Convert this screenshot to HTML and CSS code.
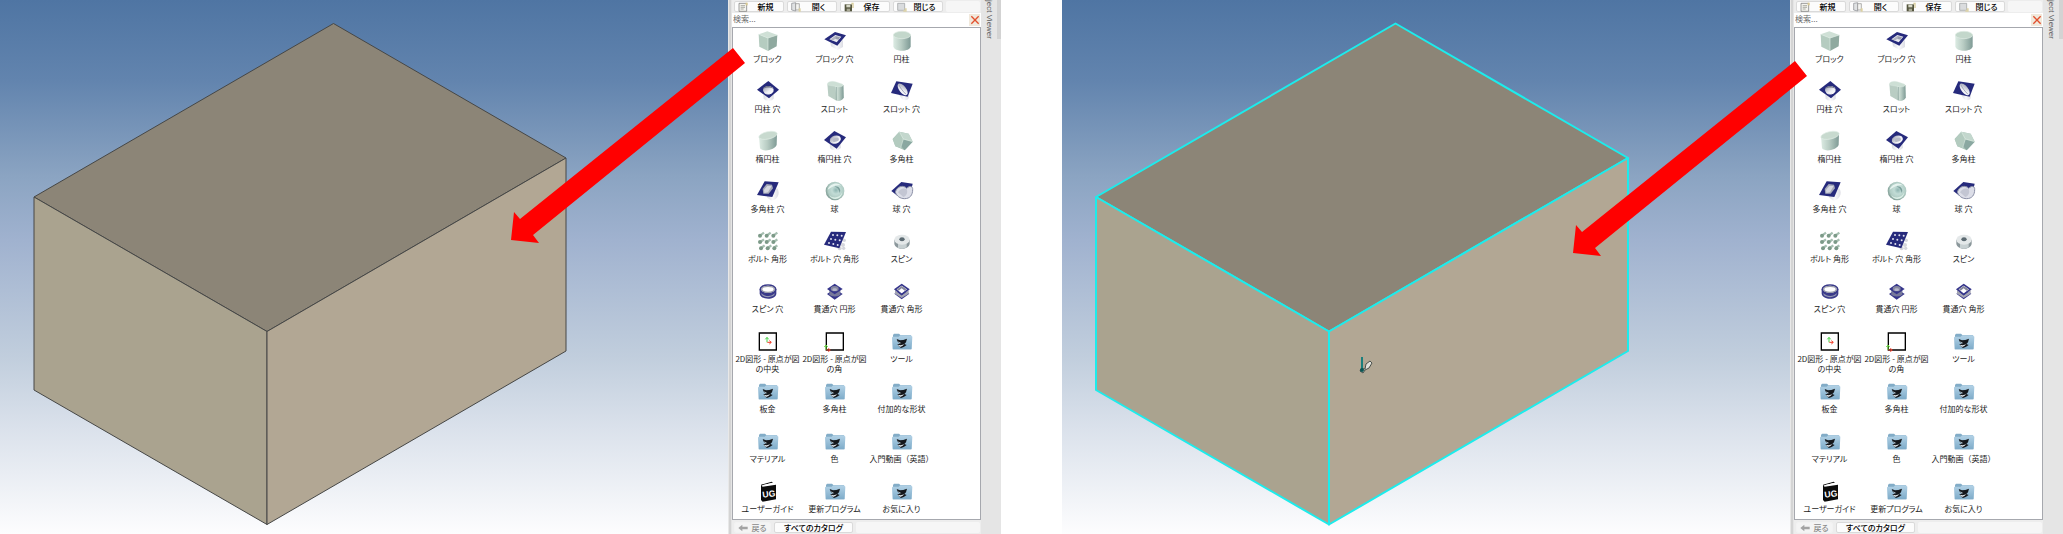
FILE: index.html
```html
<!DOCTYPE html>
<html lang="ja">
<head>
<meta charset="utf-8">
<title>カタログ</title>
<link rel="stylesheet" href="styles.css">
</head>
<body>
<svg class="defs" aria-hidden="true">
  <defs>
    <linearGradient id="gBody" x1="0" x2="1" y1="0" y2="0"><stop offset="0" stop-color="#dcebe3"/><stop offset=".45" stop-color="#b9cdc4"/><stop offset="1" stop-color="#7e9a95"/></linearGradient>
    <linearGradient id="gPale" x1="0" x2="1" y1="0" y2="0"><stop offset="0" stop-color="#d8dae2"/><stop offset=".5" stop-color="#fafafc"/><stop offset="1" stop-color="#dcdde4"/></linearGradient>
    <linearGradient id="gHole" x1="0" x2="1" y1="0" y2="1"><stop offset="0" stop-color="#9599a9"/><stop offset=".6" stop-color="#eff0f6"/><stop offset="1" stop-color="#ffffff"/></linearGradient>
    <linearGradient id="gFolder" x1="0" x2="0" y1="0" y2="1"><stop offset="0" stop-color="#b3d2e6"/><stop offset="1" stop-color="#7dabc9"/></linearGradient>
    <radialGradient id="gBall" cx=".55" cy=".45" r=".6"><stop offset="0" stop-color="#8fb5b1"/><stop offset=".35" stop-color="#c2dcd6"/><stop offset=".7" stop-color="#b0ccc4"/><stop offset="1" stop-color="#6f8c84"/></radialGradient>

    <symbol id="block" viewBox="-3 0 66 60">
      <path d="M2 10 28 1 58 12 30 21Z" fill="#cfe0d6"/><path d="M2 10 30 21V60L4 47Z" fill="#b5ccc0"/><path d="M30 21 58 12 56 46 30 60Z" fill="#8fa99f"/><path d="M2 10 30 21 58 12M30 21V60" fill="none" stroke="#dcebe2" stroke-width="2"/>
    </symbol>
    <symbol id="block-hole" viewBox="-3 0 66 60">
      <path d="M16 34 36 44 54 26V48L38 57 18 46Z" fill="url(#gPale)"/><path d="M-2 25 30 3 63 13 37 44Z" fill="#262a7c"/><path d="M13 25 31 12 49 17 35 34Z" fill="#e9eaf1"/><path d="M17 25 31 15V24L22 29Z" fill="#b2b5c2"/><path d="M31 15 45 18 41 26 31 24Z" fill="#9a9eae"/>
    </symbol>
    <symbol id="cylinder" viewBox="-3 0 66 60">
      <path d="M4 11V46C6 64 54 64 56 46V11Z" fill="url(#gBody)"/><ellipse cx="30" cy="12" rx="26" ry="11" fill="#c3d7cb" stroke="#e1ede6" stroke-width="2"/>
    </symbol>
    <symbol id="cylinder-hole" viewBox="-3 0 66 60">
      <path d="M16 40H47V52C45 62 20 62 17 52Z" fill="url(#gPale)"/><path d="M-3 26 31 0 63 26 33 52Z" fill="#262a7c"/><ellipse cx="31" cy="27" rx="16" ry="12" fill="url(#gHole)"/><path d="M16 23C20 12 40 12 46 23 38 18 24 18 16 23Z" fill="#6c7187"/><path d="M19 35C26 41 38 41 45 32" fill="none" stroke="#fff" stroke-width="3"/>
    </symbol>
    <symbol id="slot" viewBox="-3 0 66 60">
      <path d="M7 8 10 45 32 58C42 61 52 57 56 50L55 12Z" fill="#b9cdc3"/><path d="M31 16 35 58C44 61 52 57 56 50L55 12Z" fill="url(#gBody)"/><path d="M7 9C8 0 24-1 34 3L52 9C60 14 48 20 36 17L12 13C8 12 7 11 7 9Z" fill="#cddfd5" stroke="#e1ede6" stroke-width="1"/><path d="M34 18V58" stroke="#829d96" stroke-width="2"/>
    </symbol>
    <symbol id="slot-hole" viewBox="-3 0 66 60">
      <path d="M20 40 52 28 50 52C46 60 36 58 30 54Z" fill="url(#gPale)"/><path d="M13 1 62 8 47 47-3 36Z" fill="#262a7c"/><ellipse cx="32" cy="25" rx="21" ry="10" transform="rotate(52 32 25)" fill="url(#gHole)"/><path d="M20 10C24 20 32 30 42 40" stroke="#a2a6b8" stroke-width="3" fill="none"/>
    </symbol>
    <symbol id="oval" viewBox="-3 0 66 60">
      <path d="M3 17 6 52C16 64 48 58 56 42L57 7Z" fill="url(#gBody)"/><ellipse cx="30" cy="13" rx="28" ry="11" transform="rotate(-12 30 13)" fill="#c8dacf" stroke="#e1ede6" stroke-width="2"/>
    </symbol>
    <symbol id="oval-hole" viewBox="-3 0 66 60">
      <path d="M14 38 46 34 48 50C42 60 18 60 15 50Z" fill="url(#gPale)"/><path d="M-3 27 28 0 63 19 35 53Z" fill="#262a7c"/><ellipse cx="31" cy="26" rx="17" ry="12" transform="rotate(-18 31 26)" fill="url(#gHole)"/><ellipse cx="32" cy="26" rx="10" ry="6" transform="rotate(-18 32 26)" fill="#b7bac8"/>
    </symbol>
    <symbol id="prism" viewBox="-3 0 66 60">
      <path d="M2 24 22 2 50 8 62 32 38 58 10 46Z" fill="#a9c4b8"/><path d="M22 2 50 8 62 32 32 25Z" fill="#c3d7cd"/><path d="M32 25 62 32 38 58 26 44Z" fill="#8aa8a1"/><path d="M2 24 22 2 34 24 24 50 10 46Z" fill="#b3cbbf"/><path d="M22 2 34 24 62 32M34 24 26 50" fill="none" stroke="#dcebe2" stroke-width="2"/>
    </symbol>
    <symbol id="prism-hole" viewBox="-3 0 66 60">
      <path d="M36 26 58 22C68 38 58 60 38 58L26 48Z" fill="url(#gPale)"/><path d="M20 1 62 4 43 48-3 42Z" fill="#262a7c"/><path d="M14 24 26 9 42 11 45 22 32 38 16 38Z" fill="#a5a9b8"/><path d="M18 26 28 15 41 15 30 34 19 36Z" fill="#d5d7e0"/>
    </symbol>
    <symbol id="ball" viewBox="-3 0 66 60">
      <circle cx="30" cy="30" r="28" fill="url(#gBall)"/><path d="M8 26C14 8 38 2 48 14 34 10 22 18 8 26Z" fill="#e6f3ef"/><path d="M12 42C24 54 44 52 52 34 50 56 22 62 12 42Z" fill="#dcefe7"/><path d="M28 16C42 14 50 26 44 36 42 26 38 20 28 16Z" fill="#7a9f9b"/>
    </symbol>
    <symbol id="ball-hole" viewBox="-3 0 66 60">
      <path d="M-2 30 28 3 62 8 54 42 16 44Z" fill="#262a7c"/><path d="M10 33C16 14 36 12 44 22 54 12 63 16 62 26 62 42 54 53 38 53 24 53 14 45 10 33Z" fill="#dcdee8" stroke="#8a8fa6" stroke-width="3"/><path d="M18 34C24 22 36 20 44 24 48 34 44 44 34 48Z" fill="#c3c6d3"/>
    </symbol>
    <symbol id="bolts" viewBox="-3 0 66 60">
      <path d="M7 13 18 5M27 13 38 5M47 13 58 5M7 33 18 25M27 33 38 25M47 33 58 25M9 51 20 43M29 51 40 43M47 51 58 43" stroke="#a6bfb1" stroke-width="7"/><g fill="#7c9a88"><circle cx="6" cy="14" r="6"/><circle cx="26" cy="14" r="6"/><circle cx="46" cy="14" r="6"/><circle cx="6" cy="33" r="6"/><circle cx="26" cy="33" r="6"/><circle cx="46" cy="33" r="6"/><circle cx="9" cy="52" r="6"/><circle cx="29" cy="52" r="6"/><circle cx="49" cy="52" r="6"/></g>
    </symbol>
    <symbol id="bolt-holes" viewBox="-3 0 66 60">
      <g fill="#d5d6dc"><circle cx="44" cy="52" r="6"/><circle cx="54" cy="42" r="6"/><circle cx="58" cy="28" r="5"/><circle cx="56" cy="52" r="5"/></g><path d="M18 2 63 3 43 52-3 41Z" fill="#262a7c"/><g fill="#e2e3f0"><circle cx="24" cy="12" r="3"/><circle cx="37" cy="13" r="3"/><circle cx="50" cy="14" r="3"/><circle cx="18" cy="24" r="3"/><circle cx="31" cy="26" r="3"/><circle cx="44" cy="28" r="3"/><circle cx="12" cy="36" r="3"/><circle cx="25" cy="39" r="3"/><circle cx="38" cy="42" r="3"/></g>
    </symbol>
    <symbol id="spin" viewBox="-3 0 66 60">
      <path d="M7 26V38C10 58 50 58 53 38V26Z" fill="#8b979b"/><path d="M18 30V51C30 55 38 53 44 49V30Z" fill="#c7d0d2"/><ellipse cx="30" cy="26" rx="23" ry="15" fill="#e4e8e9"/><ellipse cx="30" cy="25" rx="8" ry="6" fill="#5c6a72"/>
    </symbol>
    <symbol id="spin-hole" viewBox="-3 0 66 60">
      <path d="M5 24V38C8 58 53 58 55 38V24Z" fill="#3a3a8a"/><path d="M10 36C20 48 42 48 50 36L49 42C38 51 20 50 11 42Z" fill="#9598b2"/><ellipse cx="30" cy="25" rx="23" ry="13" fill="#fff" stroke="#3a3a8a" stroke-width="5"/><ellipse cx="30" cy="25" rx="19" ry="9" fill="none" stroke="#9a9ca9" stroke-width="4"/>
    </symbol>
    <symbol id="through-round" viewBox="-3 0 66 60">
      <path d="M6 39 29 23 53 39 29 56Z" fill="#35358b"/><path d="M13 23V40C18 49 42 49 46 40V23Z" fill="#76789a"/><path d="M6 24 29 8 53 24 29 40Z" fill="#35358b"/><ellipse cx="29" cy="23" rx="12" ry="8" fill="#8587a0"/><ellipse cx="29" cy="26" rx="7" ry="4" fill="#b6b7ca"/>
    </symbol>
    <symbol id="through-square" viewBox="-3 0 66 60">
      <path d="M7 38 29 23 52 38 29 55Z" fill="#35358b"/><path d="M9 27 29 43 50 27V38L29 51 9 38Z" fill="#a3a4b2"/><path d="M29 11 49 25 29 40 10 25Z" fill="#fff" stroke="#35358b" stroke-width="5"/><path d="M15 25 29 15 44 25 38 29 29 22 20 29Z" fill="#85879a"/>
    </symbol>
    <symbol id="origin-center" viewBox="-3 0 66 60">
      <path d="M4 6H55V57H4Z" fill="#fff" stroke="#000" stroke-width="4"/><path d="M27 34V20M22 25 27 19 32 25" fill="none" stroke="#45d045" stroke-width="3"/><path d="M28 34H39M34 29 40 34 34 39" fill="none" stroke="#f03c28" stroke-width="3"/>
    </symbol>
    <symbol id="origin-corner" viewBox="-3 0 66 60">
      <path d="M4 6H55V57H4Z" fill="#fff" stroke="#000" stroke-width="4"/><path d="M3 57V43M-2 48 3 42 8 48" fill="none" stroke="#65d83a" stroke-width="3"/><path d="M4 57H15M10 52 16 57 10 62" fill="none" stroke="#f03c28" stroke-width="3"/>
    </symbol>
    <symbol id="folder" viewBox="-3 0 66 60">
      <path d="M3 12 6 8H21L25 12H57V55H3Z" fill="#82acc7"/><path d="M0 20Q0 17 3 17L20 17 25 13H57L61 17 59 55H2Z" fill="url(#gFolder)"/><path d="M14 24 24 28 34 27 45 23 42 34 37 39 44 42 35 48 27 51 22 47 16 40 24 38 17 32Z" fill="#15181c"/><path d="M17 41 26 43 37 40 31 45 24 48Z" fill="#dfe6ea"/><path d="M16 31 23 37 28 37 22 33Z" fill="#c9d6de"/>
    </symbol>
    <symbol id="guide" viewBox="-3 0 66 60">
      <path d="M9 11 41 2 45 5 14 13 10 15Z" fill="#0b0b0b"/><path d="M12 13 43 5 46 9 15 15Z" fill="#fff"/><path d="M9 13 14 17 54 11V55L14 62 9 57Z" fill="#0b0b0b"/><text x="33" y="48" transform="rotate(-7 33 40)" class="guide-mark">UG</text>
    </symbol>
    <symbol id="t-new" viewBox="0 0 30 30"><path d="M3 4H26V28H3Z" fill="#f4f4ee" stroke="#6c6c6c" stroke-width="2"/><path d="M8 11H21M8 16H21M8 21H17" stroke="#8a8a80" stroke-width="2"/><path d="M23 2H29V10H23Z" fill="#d8c890"/></symbol>
    <symbol id="t-open" viewBox="0 0 30 30"><path d="M2 4 14 2V27L2 24Z" fill="#e0e2e4" stroke="#85888c" stroke-width="2"/><path d="M14 5H25V24H14Z" fill="#f5f5f2" stroke="#8c8c8c" stroke-width="2"/><path d="M23 19H29V29H23Z" fill="#dcd0a0"/></symbol>
    <symbol id="t-save" viewBox="0 0 30 30"><path d="M2 7H24V28H2Z" fill="#55563f"/><path d="M7 8H19V16H7Z" fill="#d8d9c8"/><path d="M8 20H18V28H8Z" fill="#a9a995"/><path d="M22 2H29V18H25V7H22Z" fill="#d9ce9e"/></symbol>
    <symbol id="t-close" viewBox="0 0 30 30"><path d="M2 4H23V25H2Z" fill="#dadcde" stroke="#96999c" stroke-width="2"/><path d="M23 19H29V29H19V25H23Z" fill="#ddd3a8"/></symbol>
    <symbol id="t-clear" viewBox="0 0 30 30"><path d="M4 4 26 26M26 4 4 26" stroke="#e2502e" stroke-width="4"/></symbol>
    <symbol id="t-back" viewBox="0 0 30 24"><path d="M1 12 13 2V8H29V16H13V22Z" fill="#a3a3a3"/></symbol>
  </defs>
</svg>

<main class="page">
  <section class="shot">
    <svg class="scene" viewBox="0 0 728 534" preserveAspectRatio="xMinYMin meet" role="img" aria-label="ブロック">
      <g class="solid">
        <path class="face-top" d="M34 197 333.5 23.5 566 158 267 331.5Z"/>
        <path class="face-left" d="M34 197 267 331.5V524.5L34 390Z"/>
        <path class="face-right" d="M267 331.5 566 158V351L267 524.5Z"/>
      </g>
    </svg>
    <aside class="panel">
      <div class="browser">
        <div class="bar">
          <button class="tool"><svg class="tool-ico"><use href="#t-new"/></svg><span>新規</span></button>
          <button class="tool"><svg class="tool-ico"><use href="#t-open"/></svg><span>開く</span></button>
          <button class="tool"><svg class="tool-ico"><use href="#t-save"/></svg><span>保存</span></button>
          <button class="tool"><svg class="tool-ico"><use href="#t-close"/></svg><span>閉じる</span></button>
          <span class="filler"></span>
        </div>
        <div class="search"><input class="search-box" type="text" placeholder="検索..." aria-label="検索"><button class="clear" aria-label="クリア"><svg class="clear-ico"><use href="#t-clear"/></svg></button></div>
        <div class="catalog">
          <button class="item"><svg class="ico"><use href="#block"/></svg><span>ブロック</span></button>
          <button class="item"><svg class="ico"><use href="#block-hole"/></svg><span>ブロック 穴</span></button>
          <button class="item"><svg class="ico"><use href="#cylinder"/></svg><span>円柱</span></button>
          <button class="item"><svg class="ico"><use href="#cylinder-hole"/></svg><span>円柱 穴</span></button>
          <button class="item"><svg class="ico"><use href="#slot"/></svg><span>スロット</span></button>
          <button class="item"><svg class="ico"><use href="#slot-hole"/></svg><span>スロット 穴</span></button>
          <button class="item"><svg class="ico"><use href="#oval"/></svg><span>楕円柱</span></button>
          <button class="item"><svg class="ico"><use href="#oval-hole"/></svg><span>楕円柱 穴</span></button>
          <button class="item"><svg class="ico"><use href="#prism"/></svg><span>多角柱</span></button>
          <button class="item"><svg class="ico"><use href="#prism-hole"/></svg><span>多角柱 穴</span></button>
          <button class="item"><svg class="ico"><use href="#ball"/></svg><span>球</span></button>
          <button class="item"><svg class="ico"><use href="#ball-hole"/></svg><span>球 穴</span></button>
          <button class="item"><svg class="ico"><use href="#bolts"/></svg><span>ボルト 角形</span></button>
          <button class="item"><svg class="ico"><use href="#bolt-holes"/></svg><span>ボルト 穴 角形</span></button>
          <button class="item"><svg class="ico"><use href="#spin"/></svg><span>スピン</span></button>
          <button class="item"><svg class="ico"><use href="#spin-hole"/></svg><span>スピン 穴</span></button>
          <button class="item"><svg class="ico"><use href="#through-round"/></svg><span>貫通穴 円形</span></button>
          <button class="item"><svg class="ico"><use href="#through-square"/></svg><span>貫通穴 角形</span></button>
          <button class="item"><svg class="ico"><use href="#origin-center"/></svg><span>2D図形 - 原点が図<br>の中央</span></button>
          <button class="item"><svg class="ico"><use href="#origin-corner"/></svg><span>2D図形 - 原点が図<br>の角</span></button>
          <button class="item"><svg class="ico"><use href="#folder"/></svg><span>ツール</span></button>
          <button class="item"><svg class="ico"><use href="#folder"/></svg><span>板金</span></button>
          <button class="item"><svg class="ico"><use href="#folder"/></svg><span>多角柱</span></button>
          <button class="item"><svg class="ico"><use href="#folder"/></svg><span>付加的な形状</span></button>
          <button class="item"><svg class="ico"><use href="#folder"/></svg><span>マテリアル</span></button>
          <button class="item"><svg class="ico"><use href="#folder"/></svg><span>色</span></button>
          <button class="item full"><svg class="ico"><use href="#folder"/></svg><span>入門動画（英語）</span></button>
          <button class="item"><svg class="ico"><use href="#guide"/></svg><span>ユーザーガイド</span></button>
          <button class="item"><svg class="ico"><use href="#folder"/></svg><span>更新プログラム</span></button>
          <button class="item"><svg class="ico"><use href="#folder"/></svg><span>お気に入り</span></button>
        </div>
        <div class="bar bar-bottom">
          <button class="tool back" disabled><svg class="back-ico"><use href="#t-back"/></svg><span>戻る</span></button>
          <button class="tool all">すべてのカタログ</button>
          <span class="filler"></span>
        </div>
      </div>
      <div class="rail"><div class="rail-tab">ject Viewer</div><div class="rail-edge"></div></div>
    </aside>
    <svg class="arrow" viewBox="0 0 1001 534" preserveAspectRatio="xMinYMin meet" aria-hidden="true"><path d="M511 240 514 212 520 219 733 48 745 63 533 235 539 243Z"/></svg>
  </section>

  <section class="shot">
    <svg class="scene" viewBox="0 0 728 534" preserveAspectRatio="xMinYMin meet" role="img" aria-label="選択されたブロック">
      <g class="solid selected">
        <path class="face-top" d="M34 197 333.5 23.5 566 158 267 331.5Z"/>
        <path class="face-left" d="M34 197 267 331.5V524.5L34 390Z"/>
        <path class="face-right" d="M267 331.5 566 158V351L267 524.5Z"/>
      </g>
      <path d="M299 369 303 369 304 364 308 361 310 363 307 368 303 370 301 373 298 371Z" fill="#e2e2dc" stroke="#4a504b"/>
      <path d="M300 357V370" stroke="#1b7f7c" stroke-width="2"/>
      <circle cx="300" cy="370" r="2" fill="#0b5553"/>
    </svg>
    <aside class="panel">
      <div class="browser">
        <div class="bar">
          <button class="tool"><svg class="tool-ico"><use href="#t-new"/></svg><span>新規</span></button>
          <button class="tool"><svg class="tool-ico"><use href="#t-open"/></svg><span>開く</span></button>
          <button class="tool"><svg class="tool-ico"><use href="#t-save"/></svg><span>保存</span></button>
          <button class="tool"><svg class="tool-ico"><use href="#t-close"/></svg><span>閉じる</span></button>
          <span class="filler"></span>
        </div>
        <div class="search"><input class="search-box" type="text" placeholder="検索..." aria-label="検索"><button class="clear" aria-label="クリア"><svg class="clear-ico"><use href="#t-clear"/></svg></button></div>
        <div class="catalog">
          <button class="item"><svg class="ico"><use href="#block"/></svg><span>ブロック</span></button>
          <button class="item"><svg class="ico"><use href="#block-hole"/></svg><span>ブロック 穴</span></button>
          <button class="item"><svg class="ico"><use href="#cylinder"/></svg><span>円柱</span></button>
          <button class="item"><svg class="ico"><use href="#cylinder-hole"/></svg><span>円柱 穴</span></button>
          <button class="item"><svg class="ico"><use href="#slot"/></svg><span>スロット</span></button>
          <button class="item"><svg class="ico"><use href="#slot-hole"/></svg><span>スロット 穴</span></button>
          <button class="item"><svg class="ico"><use href="#oval"/></svg><span>楕円柱</span></button>
          <button class="item"><svg class="ico"><use href="#oval-hole"/></svg><span>楕円柱 穴</span></button>
          <button class="item"><svg class="ico"><use href="#prism"/></svg><span>多角柱</span></button>
          <button class="item"><svg class="ico"><use href="#prism-hole"/></svg><span>多角柱 穴</span></button>
          <button class="item"><svg class="ico"><use href="#ball"/></svg><span>球</span></button>
          <button class="item"><svg class="ico"><use href="#ball-hole"/></svg><span>球 穴</span></button>
          <button class="item"><svg class="ico"><use href="#bolts"/></svg><span>ボルト 角形</span></button>
          <button class="item"><svg class="ico"><use href="#bolt-holes"/></svg><span>ボルト 穴 角形</span></button>
          <button class="item"><svg class="ico"><use href="#spin"/></svg><span>スピン</span></button>
          <button class="item"><svg class="ico"><use href="#spin-hole"/></svg><span>スピン 穴</span></button>
          <button class="item"><svg class="ico"><use href="#through-round"/></svg><span>貫通穴 円形</span></button>
          <button class="item"><svg class="ico"><use href="#through-square"/></svg><span>貫通穴 角形</span></button>
          <button class="item"><svg class="ico"><use href="#origin-center"/></svg><span>2D図形 - 原点が図<br>の中央</span></button>
          <button class="item"><svg class="ico"><use href="#origin-corner"/></svg><span>2D図形 - 原点が図<br>の角</span></button>
          <button class="item"><svg class="ico"><use href="#folder"/></svg><span>ツール</span></button>
          <button class="item"><svg class="ico"><use href="#folder"/></svg><span>板金</span></button>
          <button class="item"><svg class="ico"><use href="#folder"/></svg><span>多角柱</span></button>
          <button class="item"><svg class="ico"><use href="#folder"/></svg><span>付加的な形状</span></button>
          <button class="item"><svg class="ico"><use href="#folder"/></svg><span>マテリアル</span></button>
          <button class="item"><svg class="ico"><use href="#folder"/></svg><span>色</span></button>
          <button class="item full"><svg class="ico"><use href="#folder"/></svg><span>入門動画（英語）</span></button>
          <button class="item"><svg class="ico"><use href="#guide"/></svg><span>ユーザーガイド</span></button>
          <button class="item"><svg class="ico"><use href="#folder"/></svg><span>更新プログラム</span></button>
          <button class="item"><svg class="ico"><use href="#folder"/></svg><span>お気に入り</span></button>
        </div>
        <div class="bar bar-bottom">
          <button class="tool back" disabled><svg class="back-ico"><use href="#t-back"/></svg><span>戻る</span></button>
          <button class="tool all">すべてのカタログ</button>
          <span class="filler"></span>
        </div>
      </div>
      <div class="rail"><div class="rail-tab">ject Viewer</div><div class="rail-edge"></div></div>
    </aside>
    <svg class="arrow" viewBox="0 0 1001 534" preserveAspectRatio="xMinYMin meet" aria-hidden="true"><path d="M511 253 514 225 520 232 733 61 745 76 533 248 539 256Z"/></svg>
  </section>
</main>
</body>
</html>
```
FILE: styles.css
```css
* {
  box-sizing: border-box;
}

body {
  margin: 0;
  background: #fff;
  color: #1c1c1c;
  font: 8px/10px "Noto Sans CJK JP", "Noto Sans", sans-serif;
  font-feature-settings: "palt";
}

button,
input {
  margin: 0;
  padding: 0;
  border: 0;
  background: none;
  color: inherit;
  font: inherit;
  font-feature-settings: inherit;
}

.defs {
  position: absolute;
  width: 0;
  height: 0;
}

.page {
  display: flex;
  gap: 61px;
}

.shot {
  position: relative;
  display: flex;
  flex: 1;
  min-width: 0;
  overflow: hidden;
}

.scene {
  flex: 1;
  min-width: 0;
  background: linear-gradient(#4f75a3 0%, #6284ae 15%, #8ba4c2 33%, #a0b2cf 45%, #c1cedd 67%, #dae1eb 80%, #fdfdfe 100%);
}

.solid {
  stroke: #464746;
  stroke-width: 1;
  stroke-linejoin: round;
}

.selected {
  stroke: #1cecec;
  stroke-width: 2;
}

.face-top {
  fill: #8c8577;
}

.face-left {
  fill: #aaa38f;
}

.face-right {
  fill: #b2a794;
}

.arrow {
  position: absolute;
  inset: 0;
  width: 100%;
  height: 100%;
  fill: #f00;
  pointer-events: none;
}

.panel {
  display: flex;
  flex: none;
  padding-left: 4px;
  background: linear-gradient(90deg, #e8e8e8 1px, #d4d4d4 1px 3px, #e5e5e5 3px);
}

.browser {
  display: flex;
  flex-direction: column;
  width: 249px;
  background: #ededed;
}

.bar {
  display: flex;
  gap: 3px;
  height: 13px;
  padding: 1px 1px 1px 2px;
}

.bar-bottom {
  height: 14px;
  padding-top: 2px;
}

.tool {
  display: flex;
  align-items: center;
  width: 50px;
  border: 1px solid #dadada;
  border-radius: 2px;
  background: #fcfcfc;
  color: #000;
  font-weight: 500;
  line-height: 8px;
  white-space: nowrap;
}

.tool span {
  flex: 1;
  text-align: center;
}

.tool-ico {
  width: 10px;
  height: 10px;
  margin-left: 3px;
}

.back {
  width: 37px;
  border-color: #f2f2f2;
  background: #f4f4f4;
  color: #8a8a8a;
}

.back-ico {
  width: 10px;
  height: 8px;
  margin-left: 3px;
}

.all {
  justify-content: center;
  width: 79px;
}

.filler {
  flex: 1;
  border-radius: 2px;
  background: #f6f6f6;
}

.search {
  display: flex;
  height: 14px;
  background: #fff;
}

.search-box {
  flex: 1;
  min-width: 0;
  padding: 0 1px 3px;
  outline: 0;
}

.search-box::placeholder {
  color: #6a6a6a;
  opacity: 1;
}

.clear {
  display: flex;
  align-items: center;
  justify-content: center;
  width: 11px;
  height: 12px;
  margin: 1px 1px 0 0;
  background: #f1e9dc;
}

.clear-ico {
  width: 10px;
  height: 10px;
}

.catalog {
  display: grid;
  grid-template-columns: repeat(3, 67px);
  grid-auto-rows: 32px;
  row-gap: 18px;
  padding: 3px 1px 6px;
  border: 1px solid #a6a8ae;
  background: #fff;
}

.item {
  display: flex;
  flex-direction: column;
  align-items: center;
  gap: 3px;
  white-space: nowrap;
}

.full {
  font-feature-settings: normal;
}

.ico {
  flex: none;
  width: 22px;
  height: 20px;
}

.ico,
symbol {
  overflow: visible;
}

.guide-mark {
  fill: #fff;
  font: bold 26px "Liberation Sans Narrow", "Liberation Sans", sans-serif;
  text-anchor: middle;
}

.rail {
  display: flex;
  width: 20px;
  background: #e5e5e5;
}

.rail-tab {
  flex: 1;
  padding-right: 2px;
  color: #5c5c5c;
  font: 8px/12px "Liberation Sans", sans-serif;
  white-space: nowrap;
  writing-mode: vertical-rl;
}

.rail-edge {
  width: 4px;
  height: 39px;
  background: #d3d3d3;
}
```
